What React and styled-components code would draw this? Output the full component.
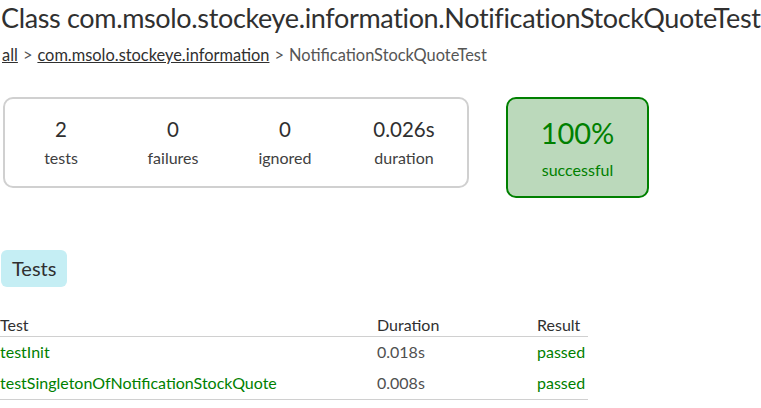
import React from "react";
import styled, { createGlobalStyle } from "styled-components";

const GlobalStyle = createGlobalStyle`
  html, body {
    margin: 0;
    padding: 0;
    background: #ffffff;
  }
  body {
    font-family: Lato, "Open Sans", sans-serif;
    color: #303030;
  }
`;

const Page = styled.div`
  width: 761px;
  height: 408px;
  overflow: hidden;
`;

const Title = styled.h1`
  margin: 0;
  padding: 0 0 0 1px;
  font-size: 27px;
  letter-spacing: -0.35px;
  font-weight: 400;
  line-height: 36px;
  white-space: nowrap;
`;

const Breadcrumb = styled.div`
  margin-top: 9px;
  padding-left: 2px;
  font-size: 16.4px;
  line-height: 20px;
  color: #555;
`;

const Crumb = styled.a`
  color: #303030;
  text-decoration: underline;
`;

const Sep = styled.span`
  color: #555;
  margin: 0 5px;
`;

const SummaryRow = styled.div`
  display: flex;
  align-items: flex-start;
  gap: 37px;
  margin-top: 32px;
  padding-left: 3px;
`;

const SummaryBox = styled.div`
  display: flex;
  width: 466px;
  height: 91px;
  box-sizing: border-box;
  border: 2px solid #d0d0d0;
  border-radius: 10px;
`;

const Counter = styled.div`
  width: ${(p) => p.$w}px;
  display: flex;
  flex-direction: column;
  align-items: center;
  padding-top: 17px;
`;

const CounterValue = styled.div`
  font-size: 20.5px;
  line-height: 26px;
`;

const CounterLabel = styled.div`
  margin-top: 6px;
  font-size: 16px;
  line-height: 20px;
  color: #404040;
`;

const SuccessBox = styled.div`
  width: 143px;
  height: 101px;
  box-sizing: border-box;
  border: 2px solid #008000;
  border-radius: 10px;
  background: #bbd9bb;
  color: #008000;
  display: flex;
  flex-direction: column;
  align-items: center;
  padding-top: 16px;
`;

const Percent = styled.div`
  font-size: 29px;
  line-height: 36px;
`;

const SuccessLabel = styled.div`
  margin-top: 9px;
  font-size: 16px;
  line-height: 20px;
`;

const Tab = styled.div`
  display: inline-block;
  margin: 52px 0 0 1px;
  padding: 0 11px;
  height: 37px;
  line-height: 37px;
  font-size: 20px;
  background: #c5eef4;
  border-radius: 6px;
`;

const Table = styled.table`
  margin-top: 27px;
  width: 588px;
  border-collapse: collapse;
  font-size: 16px;
`;

const Th = styled.th`
  text-align: left;
  font-weight: 400;
  padding: 0;
  height: 22px;
  line-height: 22px;
  width: ${(p) => p.$w || "auto"};
  border-bottom: 1px solid #d0d0d0;
`;

const Td = styled.td`
  padding: 0 0 1px;
  height: 30px;
  line-height: 30px;
  color: ${(p) => (p.$green ? "#008000" : "#505050")};
  border-bottom: ${(p) => (p.$last ? "1px solid #d0d0d0" : "none")};
`;

const tests = [
  { name: "testInit", duration: "0.018s", result: "passed" },
  { name: "testSingletonOfNotificationStockQuote", duration: "0.008s", result: "passed" },
];

const counters = [
  { value: "2", label: "tests", w: 112 },
  { value: "0", label: "failures", w: 112 },
  { value: "0", label: "ignored", w: 112 },
  { value: "0.026s", label: "duration", w: 126 },
];

export default function App() {
  return (
    <Page>
      <GlobalStyle />
      <Title>Class com.msolo.stockeye.information.NotificationStockQuoteTest</Title>
      <Breadcrumb>
        <Crumb>all</Crumb>
        <Sep>&gt;</Sep>
        <Crumb>com.msolo.stockeye.information</Crumb>
        <Sep>&gt;</Sep>
        NotificationStockQuoteTest
      </Breadcrumb>
      <SummaryRow>
        <SummaryBox>
          {counters.map((c) => (
            <Counter key={c.label} $w={c.w}>
              <CounterValue>{c.value}</CounterValue>
              <CounterLabel>{c.label}</CounterLabel>
            </Counter>
          ))}
        </SummaryBox>
        <SuccessBox>
          <Percent>100%</Percent>
          <SuccessLabel>successful</SuccessLabel>
        </SuccessBox>
      </SummaryRow>
      <Tab>Tests</Tab>
      <Table>
        <thead>
          <tr>
            <Th $w="377px">Test</Th>
            <Th $w="160px">Duration</Th>
            <Th>Result</Th>
          </tr>
        </thead>
        <tbody>
          {tests.map((t, i) => (
            <tr key={t.name}>
              <Td $green $last={i === tests.length - 1}>{t.name}</Td>
              <Td $last={i === tests.length - 1}>{t.duration}</Td>
              <Td $green $last={i === tests.length - 1}>{t.result}</Td>
            </tr>
          ))}
        </tbody>
      </Table>
    </Page>
  );
}
